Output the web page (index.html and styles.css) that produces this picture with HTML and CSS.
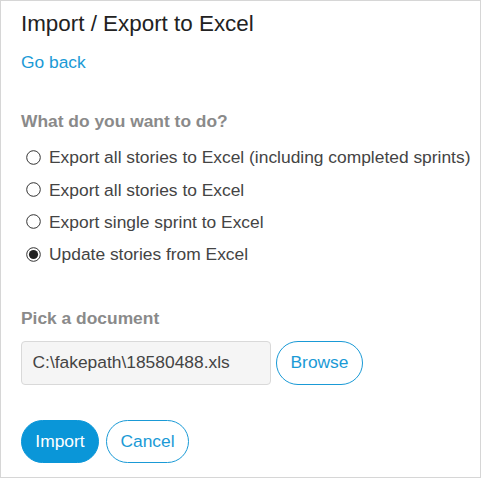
FILE: index.html
```html
<!DOCTYPE html>
<html lang="en">
<head>
<meta charset="utf-8">
<title>Import / Export to Excel</title>
<link rel="stylesheet" href="styles.css">
</head>
<body>
<div class="panel">
  <h1 class="title">Import / Export to Excel</h1>
  <a class="back" href="#">Go back</a>

  <h2 class="label label-choices">What do you want to do?</h2>
  <ul class="options">
    <li class="option">
      <svg class="radio" width="15" height="15" viewBox="0 0 15 15"><circle cx="7.5" cy="7.5" r="6.8" fill="#fff" stroke="#333" stroke-width="1"/></svg>
      <span>Export all stories to Excel (including completed sprints)</span>
    </li>
    <li class="option">
      <svg class="radio" width="15" height="15" viewBox="0 0 15 15"><circle cx="7.5" cy="7.5" r="6.8" fill="#fff" stroke="#333" stroke-width="1"/></svg>
      <span>Export all stories to Excel</span>
    </li>
    <li class="option">
      <svg class="radio" width="15" height="15" viewBox="0 0 15 15"><circle cx="7.5" cy="7.5" r="6.8" fill="#fff" stroke="#333" stroke-width="1"/></svg>
      <span>Export single sprint to Excel</span>
    </li>
    <li class="option">
      <svg class="radio" width="15" height="15" viewBox="0 0 15 15"><circle cx="7.5" cy="7.5" r="6.8" fill="#fff" stroke="#333" stroke-width="1"/><circle cx="7.5" cy="7.5" r="4.6" fill="#222"/></svg>
      <span>Update stories from Excel</span>
    </li>
  </ul>

  <h2 class="label label-doc">Pick a document</h2>
  <div class="file-row">
    <div class="file-input">C:\fakepath\18580488.xls</div>
    <button class="btn btn-outline btn-browse">Browse</button>
  </div>

  <div class="actions">
    <button class="btn btn-primary btn-import">Import</button>
    <button class="btn btn-outline btn-cancel">Cancel</button>
  </div>
</div>
</body>
</html>
```

FILE: styles.css
```css
* {
  box-sizing: border-box;
}

html, body {
  margin: 0;
  padding: 0;
  background: #fff;
}

body {
  font-family: "Liberation Sans", Arial, sans-serif;
  font-size: 17.4px;
  color: #444;
}

.panel {
  width: 481px;
  height: 478px;
  border: 1px solid #d6d6d6;
  padding: 10px 0 0 20px;
  display: flex;
  flex-direction: column;
  align-items: flex-start;
}

.title {
  margin: 0;
  font-size: 22.4px;
  line-height: 26px;
  font-weight: normal;
  color: #222;
}

.back {
  display: block;
  margin-top: 15px;
  line-height: 20px;
  color: #1a9ad6;
  text-decoration: none;
}

.label {
  margin: 0;
  font-size: 17.4px;
  line-height: 20px;
  font-weight: bold;
  color: #8a8a8a;
}

.label-choices {
  margin-top: 39px;
}

.options {
  list-style: none;
  margin: 16.3px 0 0 0;
  padding: 0 0 0 5px;
  display: flex;
  flex-direction: column;
  gap: 12.3px;
}

.option {
  display: flex;
  align-items: center;
  gap: 8px;
  line-height: 20px;
  white-space: nowrap;
  color: #444;
}

.radio {
  display: block;
  flex: none;
}

.label-doc {
  margin-top: 44px;
}

.file-row {
  margin-top: 12.8px;
  display: flex;
  gap: 5px;
}

.file-input {
  width: 250px;
  height: 44px;
  border: 1px solid #d9d9d9;
  border-radius: 4px;
  background: #f5f5f5;
  padding-left: 10.5px;
  display: flex;
  align-items: center;
  color: #444;
}

.btn {
  font-family: "Liberation Sans", Arial, sans-serif;
  font-size: 17.4px;
  border-radius: 22px;
  padding: 0;
  display: flex;
  align-items: center;
  justify-content: center;
  cursor: pointer;
}

.btn-outline {
  background: #fff;
  border: 1px solid #1a9ad6;
  color: #1a9ad6;
}

.btn-primary {
  background: #0a96d8;
  border: 1px solid #0a96d8;
  color: #fff;
}

.btn-browse {
  width: 87px;
  height: 44px;
}

.actions {
  margin-top: 35px;
  display: flex;
  gap: 7px;
}

.btn-import {
  width: 78px;
  height: 43px;
}

.btn-cancel {
  width: 83px;
  height: 43px;
}
```
